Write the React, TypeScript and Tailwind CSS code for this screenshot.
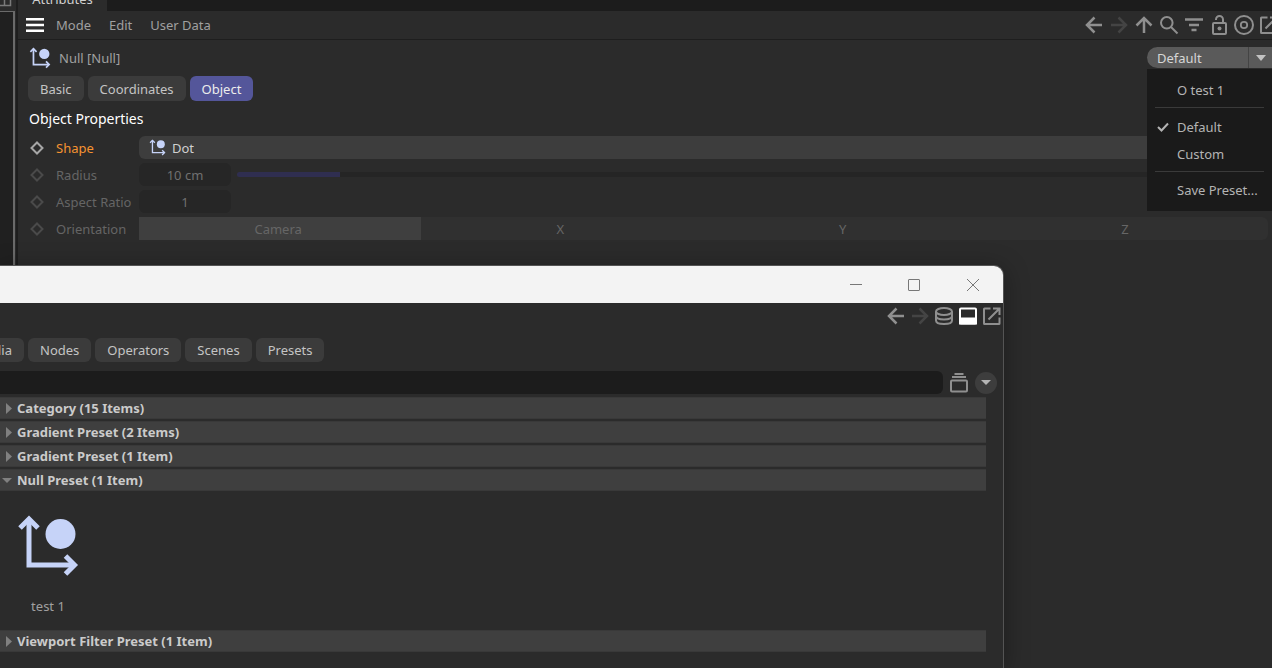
import { useState } from "react";
import type { ReactNode } from "react";

type IconProps = { className?: string };

function Icon({ className = "", children }: IconProps & { children: ReactNode }) {
  return (
    <svg viewBox="0 0 20 20" fill="none" stroke="currentColor" strokeWidth="2" aria-hidden="true" className={`size-5 shrink-0 ${className}`}>
      {children}
    </svg>
  );
}

function NullIcon({ className = "" }: IconProps) {
  return (
    <svg viewBox="0 0 64 64" fill="none" stroke="#c6d3f8" strokeWidth="5" aria-hidden="true" className={`shrink-0 ${className}`}>
      <path d="M13 5V51H58" />
      <path d="M4 14L13 5L22 14M49.5 42L58.5 51L49.5 60" />
      <circle cx="44.5" cy="20" r="15" fill="#c6d3f8" stroke="none" />
    </svg>
  );
}

const ArrowLeft = () => <Icon><path strokeWidth="2.5" d="M18 10H3M10.5 2.5L3 10L10.5 17.5" /></Icon>;
const ArrowRight = () => <Icon><path strokeWidth="2.5" d="M2 10H17M9.5 2.5L17 10L9.5 17.5" /></Icon>;
const ArrowUp = () => <Icon><path strokeWidth="2.5" d="M10 18V3M2.5 10.5L10 3L17.5 10.5" /></Icon>;
const SearchIcon = () => <Icon><circle cx="7.8" cy="7.8" r="5.8" /><path d="M12 12L18.5 18.5" /></Icon>;
const FilterIcon = () => <Icon><path strokeWidth="2.5" d="M1 4.5H19M5 10H15M7.5 15H12.5" /></Icon>;
const LockIcon = () => (
  <Icon>
    <rect x="4" y="8" width="13" height="11" rx="1" />
    <path d="M7 5V4.5A3.5 3.5 0 0 1 14 4.5V8" />
    <circle cx="10.5" cy="13.5" r="2" fill="currentColor" stroke="none" />
  </Icon>
);
const TargetIcon = () => <Icon><circle cx="10" cy="10" r="9" /><circle cx="10" cy="10" r="3.2" strokeWidth="1.8" /></Icon>;
const ExternalIcon = () => (
  <Icon>
    <path d="M8.5 2.5H2.5A0.5 0.5 0 0 0 2 3V17.5A0.5 0.5 0 0 0 2.5 18H17A0.5 0.5 0 0 0 17.5 17.5V11.5" />
    <path d="M6.5 13.5L17 3M11 2.5H17.5V9" />
  </Icon>
);
const DatabaseIcon = () => (
  <Icon>
    <ellipse cx="10" cy="5.5" rx="8" ry="3.5" />
    <path d="M2 5.5V14.5C2 19.2 18 19.2 18 14.5V5.5M2 10C2 14.6 18 14.6 18 10" />
  </Icon>
);
const PanelIcon = () => (
  <Icon className="text-white">
    <rect x="2" y="2.5" width="16" height="15" rx="1" />
    <path d="M2 12.5H18V17.5H2Z" fill="currentColor" />
  </Icon>
);
const StackIcon = () => <Icon><rect x="2" y="7.5" width="16" height="11" rx="1" /><path d="M3 4H17M5.5 1H14.5" /></Icon>;

const tools = [
  { label: "Back", icon: ArrowLeft },
  { label: "Forward", icon: ArrowRight, disabled: true },
  { label: "Up", icon: ArrowUp },
  { label: "Search", icon: SearchIcon },
  { label: "Filter", icon: FilterIcon },
  { label: "Lock", icon: LockIcon },
  { label: "Focus", icon: TargetIcon },
  { label: "New panel", icon: ExternalIcon },
];

const browserTools = [
  { label: "Back", icon: ArrowLeft },
  { label: "Forward", icon: ArrowRight, disabled: true },
  { label: "Databases", icon: DatabaseIcon },
  { label: "Info panel", icon: PanelIcon },
  { label: "New window", icon: ExternalIcon },
];

const groups = [
  { id: "category", title: "Category (15 Items)" },
  { id: "gradient-a", title: "Gradient Preset (2 Items)" },
  { id: "gradient-b", title: "Gradient Preset (1 Item)" },
  { id: "null", title: "Null Preset (1 Item)", items: ["test 1"] },
  { id: "viewport", title: "Viewport Filter Preset (1 Item)" },
];

function Keyframe({ active = false }: { active?: boolean }) {
  return (
    <svg viewBox="0 0 14 14" fill="none" strokeWidth="2" aria-hidden="true" className={`size-3.5 shrink-0 ${active ? "stroke-[#a6a6a6]" : "stroke-[#4a4a4a]"}`}>
      <path d="M7 1.5L12.5 7L7 12.5L1.5 7Z" />
    </svg>
  );
}

function Row({ label, htmlFor, active, children }: { label: string; htmlFor: string; active?: boolean; children: ReactNode }) {
  return (
    <div className="flex h-[23px] items-center">
      <div className="flex w-[109px] shrink-0 items-center gap-3 whitespace-nowrap">
        <Keyframe active={active} />
        <label htmlFor={htmlFor} className={active ? "text-[#f59331]" : "text-[#656565]"}>{label}</label>
      </div>
      {children}
    </div>
  );
}

function PresetMenu() {
  const [preset, setPreset] = useState("Default");
  const [open, setOpen] = useState(true);
  const item = "flex h-[27px] w-full items-center pl-[30px] text-left whitespace-nowrap";

  return (
    <div className="relative w-[125px]">
      <button type="button" onClick={() => setOpen(!open)} aria-expanded={open} className="flex h-[21px] w-full overflow-hidden rounded-l-full rounded-r-lg bg-[#5a5a5a] text-[#d6d6d6]">
        <span className="flex h-full flex-1 items-center border-r border-[#444] pl-2.5">{preset}</span>
        <span className="flex h-full w-[23px] items-center justify-center">
          <svg viewBox="0 0 10 6" className="w-2.5 fill-[#c2c2c2]" aria-hidden="true"><path d="M0 0H10L5 6Z" /></svg>
        </span>
      </button>
      {open && (
        <div className="absolute top-full right-0 z-10 mt-px w-full bg-[#1a1a1a] pt-[7px] pb-2 text-[#b4b4b4]">
          <button type="button" onClick={() => setPreset("test 1")} className={item}>O test 1</button>
          <hr className="mx-2 mt-1 mb-[5px] border-[#3a3a3a]" />
          {["Default", "Custom"].map((name) => (
            <button key={name} type="button" onClick={() => setPreset(name)} className="flex h-[27px] w-full items-center pl-2.5 text-left">
              <span className="w-5">
                {preset === name && (
                  <svg viewBox="0 0 12 10" fill="none" stroke="currentColor" strokeWidth="2" className="w-3" aria-hidden="true"><path d="M1 5L4.5 8.5L11 1.5" /></svg>
                )}
              </span>
              {name}
            </button>
          ))}
          <hr className="mx-2 my-1 border-[#3a3a3a]" />
          <button type="button" className={item}>Save Preset...</button>
        </div>
      )}
    </div>
  );
}

function AttributesPanel() {
  const [tab, setTab] = useState("Object");
  const [axis, setAxis] = useState("Camera");
  const [radius, setRadius] = useState(10);

  return (
    <main className="min-w-0 flex-1 overflow-hidden">
      <div className="flex h-[11px] bg-[#1c1c1c]">
        <div className="flex w-[89px] items-end justify-center bg-[#2b2b2b] pb-[5px] leading-none text-[#d0d0d0]">Attributes</div>
      </div>

      {/* Menu bar */}
      <div className="flex h-[29px] items-center justify-between border-b border-[#1e1e1e] text-[#a0a0a0]">
        <nav className="flex items-center gap-[18px] pl-2">
          <button type="button" aria-label="Menu" className="-mr-1.5 text-white">
            <svg viewBox="0 0 18 14" className="w-[18px] fill-current" aria-hidden="true"><path d="M0 0H18V2.5H0ZM0 5.75H18V8.25H0ZM0 11.5H18V14H0Z" /></svg>
          </button>
          <button type="button">Mode</button>
          <button type="button">Edit</button>
          <button type="button">User Data</button>
        </nav>
        <div className="-mr-[7px] flex gap-[5px]">
          {tools.map(({ label, icon: ToolIcon, disabled }) => (
            <button key={label} type="button" aria-label={label} disabled={disabled} className="text-[#8f8f8f] disabled:text-[#444]">
              <ToolIcon />
            </button>
          ))}
        </div>
      </div>

      <div className="flex h-9 items-start justify-between pt-[7px] pl-[11px] text-[#a0a0a0]">
        <div className="flex items-center gap-2">
          <NullIcon className="size-[22px]" />
          <h1>Null [Null]</h1>
        </div>
        <PresetMenu />
      </div>

      <div className="flex gap-1 pl-2.5">
        {["Basic", "Coordinates", "Object"].map((name) => (
          <button
            key={name}
            type="button"
            onClick={() => setTab(name)}
            className={`h-[25px] rounded-md px-3 ${tab === name ? "bg-[#54569a] text-[#ececec]" : "bg-[#3b3b3b] text-[#c4c4c4]"}`}
          >
            {name}
          </button>
        ))}
      </div>

      <h2 className="flex h-[35px] items-center pl-[11px] text-sm text-white">Object Properties</h2>

      <div className="flex flex-col gap-1 pr-1 pl-3">
        <Row label="Shape" htmlFor="shape" active>
          <div className="flex h-full flex-1 items-center gap-1.5 rounded-md bg-[#3d3d3d] pl-2.5 text-[#d0d0d0]">
            <NullIcon className="size-[17px]" />
            <select id="shape" className="flex-1 appearance-none bg-transparent outline-none">
              <option>Dot</option>
            </select>
          </div>
        </Row>
        <Row label="Radius" htmlFor="radius">
          <input id="radius" readOnly value={`${radius} cm`} className="h-full w-[92px] rounded-md bg-[#262626] text-center text-[#707070] outline-none" />
          <input
            type="range"
            aria-label="Radius slider"
            value={radius}
            onChange={(e) => setRadius(Number(e.target.value))}
            className="ml-1.5 h-[5px] flex-1 appearance-none rounded-full [&::-webkit-slider-thumb]:size-0 [&::-webkit-slider-thumb]:appearance-none"
            style={{ background: `linear-gradient(to right, #2f2e50 ${radius}%, #252525 ${radius}%)` }}
          />
        </Row>
        <Row label="Aspect Ratio" htmlFor="aspect">
          <input id="aspect" defaultValue="1" className="h-full w-[92px] rounded-md bg-[#262626] text-center text-[#707070] outline-none" />
        </Row>
        <Row label="Orientation" htmlFor="axis-Camera">
          <div className="grid h-full flex-1 grid-cols-4 overflow-hidden rounded-r-md bg-[#303030]">
            {["Camera", "X", "Y", "Z"].map((name) => (
              <label key={name} className={`flex items-center justify-center pr-1 text-[#666] ${axis === name ? "bg-[#3f3f3f]" : ""}`}>
                <input id={`axis-${name}`} type="radio" name="axis" checked={axis === name} onChange={() => setAxis(name)} className="sr-only" />
                {name}
              </label>
            ))}
          </div>
        </Row>
      </div>
    </main>
  );
}

function AssetBrowser() {
  const [openGroup, setOpenGroup] = useState("null");

  return (
    <section className="absolute top-[265px] bottom-0 left-0 flex w-[1004px] flex-col overflow-hidden rounded-tr-[10px] border-t border-r border-[#545454] bg-[#2b2b2b] shadow-[0_4px_24px_rgba(0,0,0,0.35)]">
      <div className="flex h-[37px] shrink-0 items-center justify-end bg-[#f3f3f3] text-[#777]">
        <button type="button" aria-label="Minimize" className="flex w-[58px] justify-center">
          <svg viewBox="0 0 12 12" className="size-3" fill="none" stroke="currentColor"><path d="M0 5.5H12" /></svg>
        </button>
        <button type="button" aria-label="Maximize" className="flex w-[58px] justify-center">
          <svg viewBox="0 0 12 12" className="size-3" fill="none" stroke="currentColor"><rect x="0.5" y="0.5" width="11" height="11" rx="0.5" /></svg>
        </button>
        <button type="button" aria-label="Close" className="flex w-[60px] justify-center">
          <svg viewBox="0 0 12 12" className="size-3" fill="none" stroke="currentColor"><path d="M0 0L12 12M12 0L0 12" /></svg>
        </button>
      </div>

      <div className="flex h-[35px] shrink-0 items-start justify-end gap-1 pt-[3px] pr-px">
        {browserTools.map(({ label, icon: ToolIcon, disabled }) => (
          <button key={label} type="button" aria-label={label} disabled={disabled} className="text-[#8f8f8f] disabled:text-[#444]">
            <ToolIcon />
          </button>
        ))}
      </div>

      <div className="-ml-10 flex shrink-0 gap-1 text-[#c4c4c4]">
        {["Media", "Nodes", "Operators", "Scenes", "Presets"].map((name) => (
          <button key={name} type="button" className="h-6 rounded-md bg-[#3b3b3b] px-3 first:w-16 first:text-right">{name}</button>
        ))}
      </div>

      <div className="flex shrink-0 items-center pt-[9px] pr-1.5 pb-[3px] text-[#8f8f8f]">
        <input aria-label="Search assets" className="h-[23px] flex-1 rounded-r-md bg-[#1c1c1c] px-2 outline-none" />
        <button type="button" aria-label="Collections" className="ml-1.5"><StackIcon /></button>
        <button type="button" aria-label="More options" className="ml-1.5 flex size-[22px] items-center justify-center rounded-full bg-[#3d3d3d]">
          <svg viewBox="0 0 10 5" className="w-2.5 fill-[#b4b4b4]" aria-hidden="true"><path d="M0 0H10L5 5Z" /></svg>
        </button>
      </div>

      <div className="flex flex-col gap-0.5 pr-[17px]">
        {groups.map((group) => {
          const isOpen = openGroup === group.id;
          return (
            <div key={group.id}>
              <button
                type="button"
                aria-expanded={isOpen}
                onClick={() => setOpenGroup(isOpen ? "" : group.id)}
                className="flex h-[22px] w-full items-center border-y border-[#393939] bg-[#3f3f3f] text-left font-bold text-[#cbcbcb]"
              >
                <span className="w-[17px]">
                  {isOpen ? (
                    <svg viewBox="0 0 10 5" className="ml-0.5 w-2.5 fill-[#808080]" aria-hidden="true"><path d="M0 0H10L5 5Z" /></svg>
                  ) : (
                    <svg viewBox="0 0 6 11" className="ml-1.5 h-[11px] fill-[#808080]" aria-hidden="true"><path d="M0 0L6 5.5L0 11Z" /></svg>
                  )}
                </span>
                {group.title}
              </button>
              {isOpen && group.items && (
                <div className="flex h-[137px] pt-[23px]">
                  {group.items.map((name) => (
                    <figure key={name} className="flex w-24 flex-col items-center gap-[18px] text-[#a0a0a0]">
                      <NullIcon className="size-16" />
                      <figcaption>{name}</figcaption>
                    </figure>
                  ))}
                </div>
              )}
            </div>
          );
        })}
      </div>
    </section>
  );
}

export default function App() {
  return (
    <div className="relative flex h-screen overflow-hidden bg-[#2b2b2b] font-['Noto_Sans',sans-serif] text-[13px] leading-5">
      <aside className="flex w-[18px] shrink-0 flex-col border-r-2 border-[#1e1e1e] bg-[#2b2b2b]">
        <svg viewBox="0 0 16 11" className="h-[11px] w-4 shrink-0" fill="none" stroke="#7a7a7a" aria-hidden="true">
          <path d="M0 5.5H10.5V0M4.5 0V5.5" strokeWidth="1.5" />
        </svg>
        <div className="mr-px flex-1 border-t border-r-2 border-[#6a6a6a] bg-[#202020]" />
      </aside>
      <AttributesPanel />
      <AssetBrowser />
    </div>
  );
}
